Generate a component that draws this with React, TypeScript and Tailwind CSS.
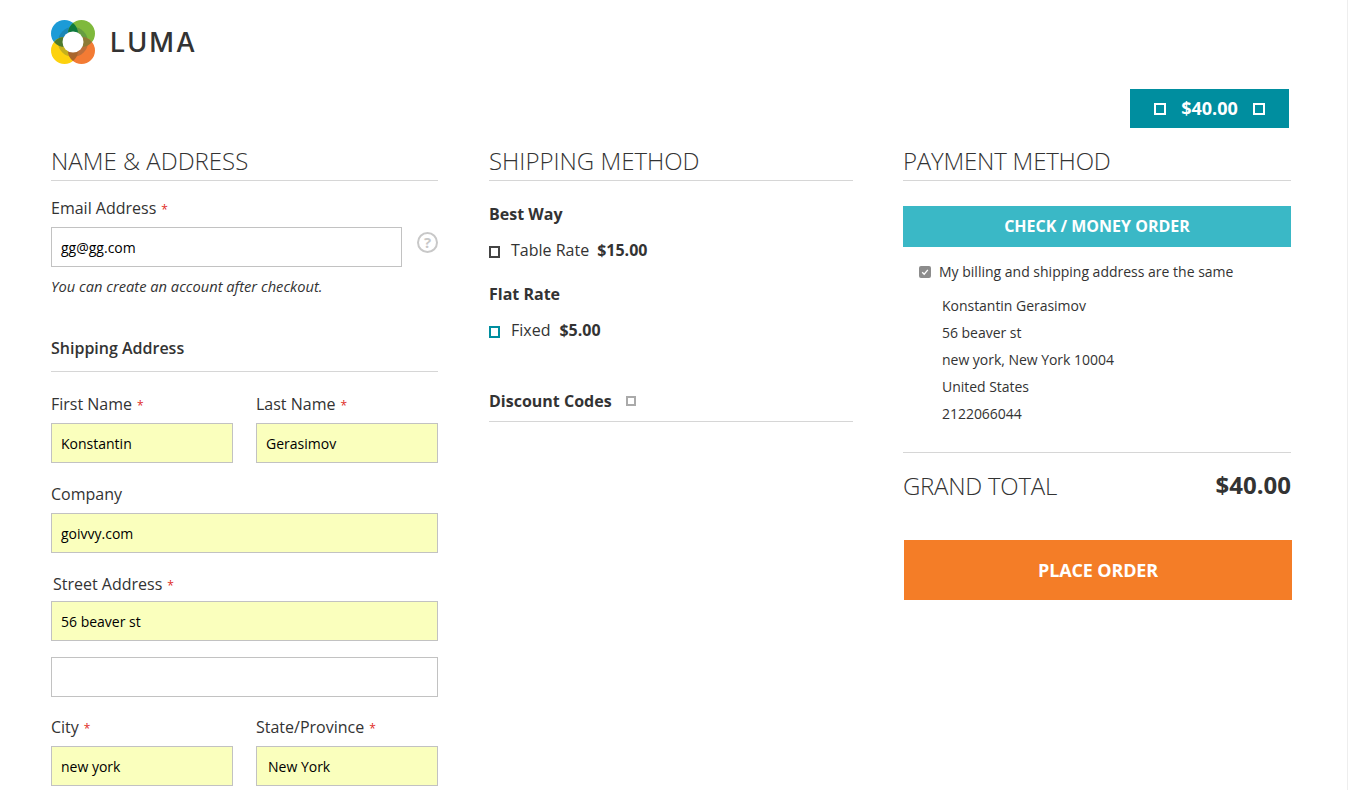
const font = "font-['Open_Sans',sans-serif]"

function Req() {
  return <span className="ml-[5px] text-[12px] text-[#e02b27]">*</span>
}

function Label({ text, className = "" }: { text: string; className?: string }) {
  return (
    <div className={`h-[24px] text-[16px] leading-[24px] text-[#333] ${className}`}>
      {text}
      <Req />
    </div>
  )
}

function Input({ value, filled = true, className = "" }: { value?: string; filled?: boolean; className?: string }) {
  return (
    <div
      className={`flex h-[40px] items-center border border-[#c2c2c2] px-[9px] text-[14px] text-black ${
        filled ? "bg-[#faffbd]" : "bg-white"
      } ${className}`}
    >
      {value}
    </div>
  )
}

function Heading({ text, className = "" }: { text: string; className?: string }) {
  return (
    <h2 className={`h-[35px] border-b border-[#d6d6d6] text-[24px] font-light leading-[30px] text-[#333] ${className}`}>
      {text}
    </h2>
  )
}

function Logo() {
  const centers = [
    { cx: 13.5, cy: 13.5, fill: "#1c9bd7" },
    { cx: 30.5, cy: 13.5, fill: "#7fb93c" },
    { cx: 13.5, cy: 30.5, fill: "#fdd20e" },
    { cx: 30.5, cy: 30.5, fill: "#f37b34" },
  ]
  // overlap of neighbouring circles: [first, second, colour]
  const lenses: [number, number, string][] = [
    [0, 1, "#0f7a3e"],
    [0, 2, "#4d7a2c"],
    [1, 3, "#8d7a35"],
    [2, 3, "#a9652b"],
  ]
  return (
    <svg width="44" height="44" viewBox="0 0 44 44" className="shrink-0">
      <defs>
        {centers.map((c, i) => (
          <clipPath key={i} id={`logo-clip-${i}`}>
            <circle cx={c.cx} cy={c.cy} r="13.5" />
          </clipPath>
        ))}
      </defs>
      {centers.map((c, i) => (
        <circle key={i} cx={c.cx} cy={c.cy} r="13.5" fill={c.fill} />
      ))}
      <circle cx="22" cy="22" r="15" fill="#1c4a50" opacity="0.25" />
      {lenses.map(([a, b, fill], i) => (
        <g key={i} clipPath={`url(#logo-clip-${a})`}>
          <circle cx={centers[b].cx} cy={centers[b].cy} r="13.5" fill={fill} />
        </g>
      ))}
      <circle cx="22" cy="22" r="10.5" fill="white" />
    </svg>
  )
}

function Square({ className }: { className: string }) {
  return <span className={`inline-block shrink-0 ${className}`} />
}

export default function App() {
  return (
    <div className={`h-[790px] w-[1348px] overflow-hidden border-r border-[#eee] bg-white ${font}`}>
      <header className="flex items-center gap-[15px] pl-[51px] pt-[20px]">
        <Logo />
        <span className="pt-[2px] font-['Inter',sans-serif] text-[27px] font-medium leading-[42px] tracking-[2px] text-[#333]">
          LUMA
        </span>
      </header>

      <div className="mt-[25px] flex justify-end pr-[58px]">
        <div className="flex h-[39px] w-[159px] items-center justify-center gap-[15px] bg-[#008e9f] text-[18px] font-bold text-white">
          <Square className="h-[12px] w-[12px] border-2 border-white" />
          <span>$40.00</span>
          <Square className="h-[12px] w-[12px] border-2 border-white" />
        </div>
      </div>

      <main className="mt-[18px] flex items-start pl-[51px]">
        <section className="w-[387px]">
          <Heading text="NAME & ADDRESS" />
          <Label text="Email Address" className="mt-[15px]" />
          <div className="mt-[7px] flex items-center">
            <Input value="gg@gg.com" filled={false} className="w-[351px]" />
            <span className="mb-[10px] ml-[15px] flex h-[21px] w-[21px] items-center justify-center rounded-full border-2 border-[#c8c8c8] text-[15px] font-bold text-[#c8c8c8]">
              ?
            </span>
          </div>
          <p className="mt-[9px] h-[20px] text-[14.7px] italic leading-[20px] text-[#333]">
            You can create an account after checkout.
          </p>
          <div className="mt-[40px] h-[25px] text-[16px] font-semibold leading-[24px] text-[#333]">
            Shipping Address
          </div>
          <div className="mt-[10px] border-t border-[#d6d6d6]" />

          <div className="mt-[20px] flex gap-[23px]">
            <div className="w-[182px]">
              <Label text="First Name" />
              <Input value="Konstantin" className="mt-[7px]" />
            </div>
            <div className="w-[182px]">
              <Label text="Last Name" />
              <Input value="Gerasimov" className="mt-[7px]" />
            </div>
          </div>

          <div className="mt-[19px] h-[24px] text-[16px] leading-[24px] text-[#333]">Company</div>
          <Input value="goivvy.com" className="mt-[7px]" />

          <Label text="Street Address" className="mt-[19px] pl-[2px]" />
          <Input value="56 beaver st" className="mt-[5px]" />
          <Input filled={false} className="mt-[16px]" />

          <div className="mt-[18px] flex gap-[23px]">
            <div className="w-[182px]">
              <Label text="City" />
              <Input value="new york" className="mt-[7px]" />
            </div>
            <div className="w-[182px]">
              <Label text="State/Province" />
              <Input value="New York" className="mt-[7px] pl-[11px]" />
            </div>
          </div>
        </section>

        <section className="ml-[51px] w-[364px]">
          <Heading text="SHIPPING METHOD" />
          <div className="mt-[21px] h-[24px] text-[16px] font-bold leading-[24px] text-[#333]">Best Way</div>
          <div className="mt-[12px] flex h-[24px] items-center text-[16px] leading-[24px] text-[#333]">
            <Square className="mt-[4px] h-[12px] w-[11px] border-2 border-[#444]" />
            <span className="ml-[11px]">Table Rate</span>
            <span className="ml-[8px] font-bold">$15.00</span>
          </div>
          <div className="mt-[20px] h-[24px] text-[16px] font-bold leading-[24px] text-[#333]">Flat Rate</div>
          <div className="mt-[12px] flex h-[24px] items-center text-[16px] leading-[24px] text-[#333]">
            <Square className="mt-[4px] h-[12px] w-[11px] border-2 border-[#008e9f]" />
            <span className="ml-[11px]">Fixed</span>
            <span className="ml-[9px] font-bold">$5.00</span>
          </div>
          <div className="mt-[47px] flex h-[33px] items-start border-b border-[#d6d6d6] text-[16px] font-bold leading-[24px] text-[#333]">
            <span>Discount Codes</span>
            <Square className="ml-[14px] mt-[7px] h-[10px] w-[10px] border-2 border-[#aaa]" />
          </div>
        </section>

        <section className="ml-[50px] w-[388px]">
          <Heading text="PAYMENT METHOD" className="tracking-[-0.2px]" />
          <div className="mt-[25px] flex h-[41px] items-center justify-center bg-[#3ab8c6] pb-[2px] text-[16px] font-bold text-white">
            CHECK / MONEY ORDER
          </div>
          <div className="mt-[15px] flex h-[20px] items-center pl-[16px] text-[14px] leading-[20px] text-[#333]">
            <span className="flex h-[12px] w-[12px] items-center justify-center rounded-[2px] bg-[#8c8c8c]">
              <svg width="8" height="8" viewBox="0 0 8 8" fill="none" stroke="white" strokeWidth="1.3">
                <path d="M1.2 4.2 3.2 6.2 6.8 1.8" />
              </svg>
            </span>
            <span className="ml-[8px]">My billing and shipping address are the same</span>
          </div>
          <div className="mt-[10px] pl-[39px] text-[14px] leading-[27px] tracking-[-0.03px] text-[#333]">
            <div>Konstantin Gerasimov</div>
            <div>56 beaver st</div>
            <div>new york, New York 10004</div>
            <div>United States</div>
            <div>2122066044</div>
          </div>
          <div className="mt-[25px] border-t border-[#d6d6d6]" />
          <div className="mt-[16px] flex h-[34px] items-center justify-between text-[#333]">
            <span className="text-[24px] font-light tracking-[-0.25px]">GRAND TOTAL</span>
            <span className="pb-[2px] text-[24px] font-bold">$40.00</span>
          </div>
          <div className="ml-[1px] mt-[37px] flex h-[60px] w-[388px] items-center justify-center bg-[#f47d27] text-[18px] font-bold tracking-[-0.15px] text-white">
            PLACE ORDER
          </div>
        </section>
      </main>
    </div>
  )
}
